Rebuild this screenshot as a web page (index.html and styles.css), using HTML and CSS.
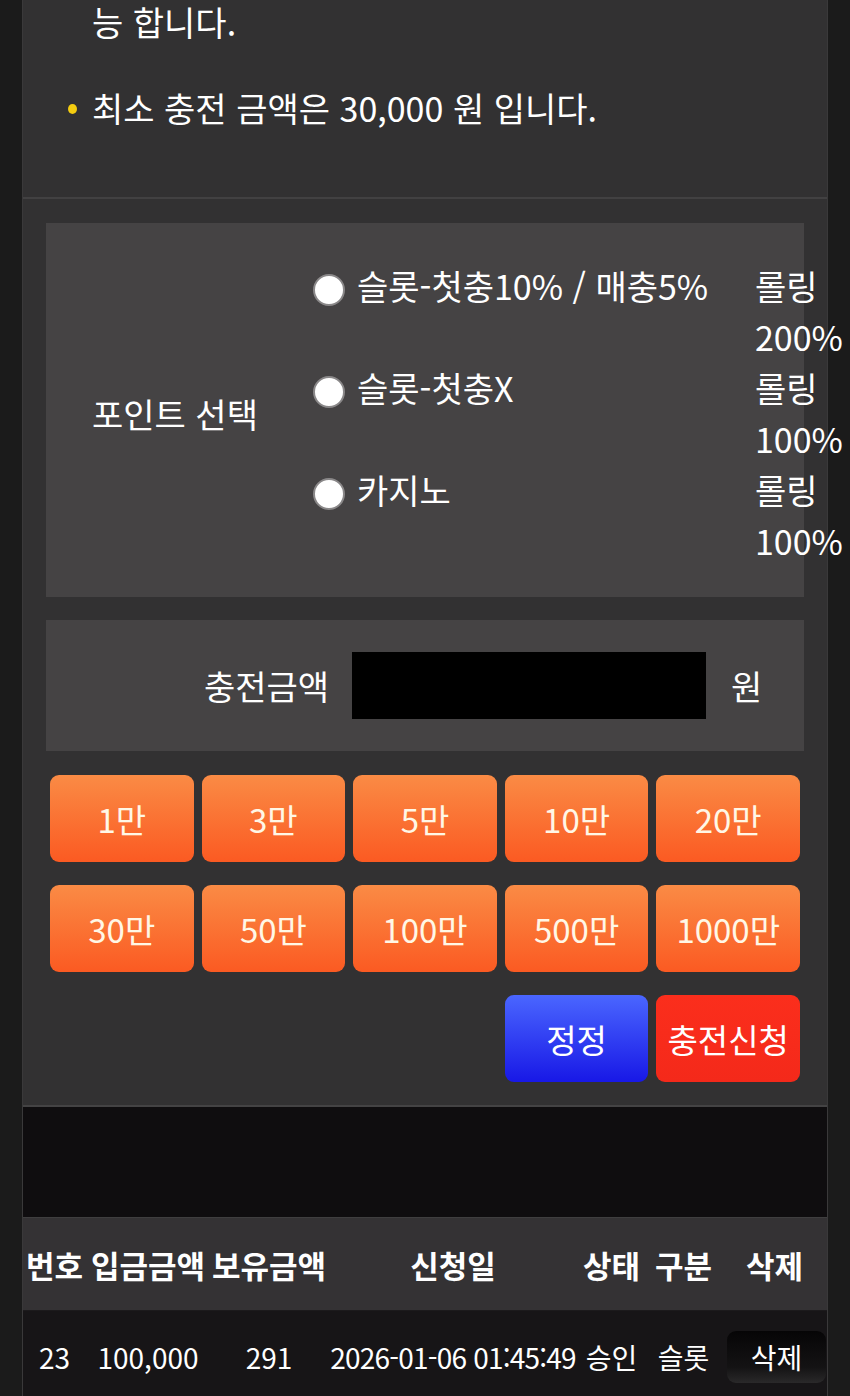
FILE: index.html
```html
<!DOCTYPE html>
<html lang="ko">
<head>
  <meta charset="UTF-8">
  <title>충전신청</title>
  <meta name="viewport" content="width=device-width, initial-scale=1.0">
  <link rel="stylesheet" href="styles.css">
</head>
<body>

  <div class="wrap">

    <!-- 안내 문구 -->
    <section class="notice">
      <p class="tail">능 합니다.</p>
      <ul>
        <li><span class="dot"></span>최소 충전 금액은 30,000 원 입니다.</li>
      </ul>
    </section>

    <!-- 충전 폼 -->
    <section class="charge">
      <div class="panel point">
        <div class="point-label">포인트 선택</div>
        <ul class="options">
          <li>
            <input type="radio" name="point" class="radio">
            <span class="opt-name">슬롯-첫충10% / 매충5%</span>
            <span class="rolling">롤링 200%</span>
          </li>
          <li>
            <input type="radio" name="point" class="radio">
            <span class="opt-name">슬롯-첫충X</span>
            <span class="rolling">롤링 100%</span>
          </li>
          <li>
            <input type="radio" name="point" class="radio">
            <span class="opt-name">카지노</span>
            <span class="rolling">롤링 100%</span>
          </li>
        </ul>
      </div>

      <div class="panel amount">
        <label class="amount-label" for="amount">충전금액</label>
        <input type="text" id="amount" class="amount-input">
        <span class="won">원</span>
      </div>

      <div class="quick">
        <button class="btn orange">1만</button>
        <button class="btn orange">3만</button>
        <button class="btn orange">5만</button>
        <button class="btn orange">10만</button>
        <button class="btn orange">20만</button>
        <button class="btn orange">30만</button>
        <button class="btn orange">50만</button>
        <button class="btn orange">100만</button>
        <button class="btn orange">500만</button>
        <button class="btn orange">1000만</button>
        <button class="btn blue reset">정정</button>
        <button class="btn red">충전신청</button>
      </div>
    </section>

    <div class="gap"></div>

    <!-- 신청 내역 -->
    <table class="history">
      <colgroup>
        <col style="width:63px">
        <col style="width:124px">
        <col style="width:118px">
        <col style="width:250px">
        <col style="width:67px">
        <col style="width:77px">
        <col style="width:105px">
      </colgroup>
      <thead>
        <tr>
          <th>번호</th>
          <th>입금금액</th>
          <th>보유금액</th>
          <th>신청일</th>
          <th>상태</th>
          <th>구분</th>
          <th>삭제</th>
        </tr>
      </thead>
      <tbody>
        <tr>
          <td>23</td>
          <td>100,000</td>
          <td>291</td>
          <td class="date">2026-01-06 01:45:49</td>
          <td>승인</td>
          <td>슬롯</td>
          <td><button class="del">삭제</button></td>
        </tr>
      </tbody>
    </table>

  </div>

</body>
</html>
```

FILE: styles.css
```css
/* 기본 */
body {
  margin: 0;
  background: #1b1b1b;
  color: #fff;
  font-family: "Noto Sans CJK KR", "Noto Sans", sans-serif;
  font-size: 34px;
}
.wrap {
  margin-left: 22px;
  width: 804px;
  border-left: 1px solid #3a393a;
  border-right: 1px solid #3a393a;
  background: #323132;
  min-height: 1396px;
}

/* 안내 문구 */
.notice {
  padding: 0 0 67px 69px;
  border-bottom: 2px solid #424142;
}
.notice p,
.notice ul {
  margin: 0;
  padding: 0;
  list-style: none;
  line-height: 44px;
}
.notice ul {
  margin-top: 42px;
}
.notice li {
  position: relative;
}
.dot {
  position: absolute;
  left: -24px;
  top: 18px;
  width: 9px;
  height: 10px;
  border-radius: 50%;
  background: #f4cc10;
}

/* 충전 폼 */
.charge {
  padding: 24px 23px 23px;
  border-bottom: 2px solid #444344;
}
.panel {
  background: #454344;
}
.point {
  display: flex;
  align-items: center;
  padding: 37px 0 31px;
}
.point-label {
  flex: none;
  width: 221px;
  padding-left: 46px;
}
.options {
  flex: none;
  margin: 0;
  padding: 0;
  list-style: none;
  line-height: 51px;
}
.options li {
  display: flex;
  align-items: flex-start;
}
.radio {
  appearance: none;
  -webkit-appearance: none;
  margin: 14px 12px 0 0;
  width: 32px;
  height: 32px;
  border-radius: 50%;
  background: #fff;
  border: 2px solid #8a8889;
  box-sizing: border-box;
  flex: none;
}
.opt-name {
  width: 398px;
  flex: none;
  white-space: nowrap;
}
.rolling {
  width: 68px;
  flex: none;
}

.amount {
  margin-top: 23px;
  height: 131px;
  display: flex;
  align-items: center;
}
.amount-label {
  width: 283px;
  text-align: right;
}
.amount-input {
  margin-left: 23px;
  width: 354px;
  height: 67px;
  border: none;
  background: #000;
  color: #fff;
  font-size: 28px;
  padding: 0 10px;
  box-sizing: border-box;
}
.won {
  margin-left: 25px;
}

/* 금액 버튼 */
.quick {
  margin-top: 24px;
  padding: 0 4px;
  display: grid;
  grid-template-columns: repeat(5, 1fr);
  grid-auto-rows: 87px;
  gap: 23px 8px;
}
.btn {
  border: none;
  border-radius: 9px;
  font-family: inherit;
  font-size: 33px;
  color: #fff7e6;
  padding: 0;
  cursor: pointer;
}
.btn.orange {
  background: linear-gradient(#fa8b45, #fb5a22);
}
.btn.blue {
  background: linear-gradient(#4a66ff, #1818e6);
  color: #fff;
}
.btn.red {
  background: linear-gradient(#fb2e1c, #f4291a);
  color: #fff;
}
.btn.reset {
  grid-column: 4;
}

/* 빈 영역 */
.gap {
  height: 110px;
  background: #0f0d0f;
}

/* 내역 테이블 */
.history {
  width: 804px;
  table-layout: fixed;
  border-collapse: collapse;
  border-top: 1px solid #3f3e3f;
}
.history th {
  height: 92px;
  padding: 0;
  background: #343234;
  font-size: 31px;
  font-weight: bold;
  white-space: nowrap;
  border-bottom: 1px solid #1c1a1c;
}
.history td {
  height: 92px;
  padding: 0;
  background: #171517;
  font-size: 28px;
  text-align: center;
  white-space: nowrap;
}
.history td.date {
  letter-spacing: -0.8px;
}
.del {
  width: 99px;
  height: 52px;
  border: none;
  border-radius: 9px;
  background: linear-gradient(#060506, #141314 70%, #2a292a);
  color: #fff;
  font-family: inherit;
  font-size: 28px;
  margin-left: 4px;
}
```
